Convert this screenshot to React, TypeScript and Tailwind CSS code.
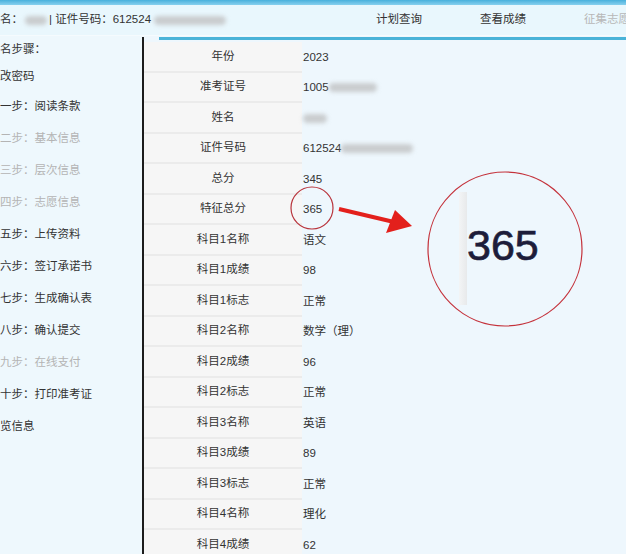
import React from "react";

const rows: { label: string; value: React.ReactNode }[] = [
  { label: "年份", value: "2023" },
  { label: "准考证号", value: <>1005<Blur w={48} /></> },
  { label: "姓名", value: <Blur w={24} /> },
  { label: "证件号码", value: <>612524<Blur w={72} /></> },
  { label: "总分", value: "345" },
  { label: "特征总分", value: "365" },
  { label: "科目1名称", value: "语文" },
  { label: "科目1成绩", value: "98" },
  { label: "科目1标志", value: "正常" },
  { label: "科目2名称", value: "数学（理）" },
  { label: "科目2成绩", value: "96" },
  { label: "科目2标志", value: "正常" },
  { label: "科目3名称", value: "英语" },
  { label: "科目3成绩", value: "89" },
  { label: "科目3标志", value: "正常" },
  { label: "科目4名称", value: "理化" },
  { label: "科目4成绩", value: "62" },
];

const steps: { text: string; off?: boolean }[] = [
  { text: "一步：阅读条款" },
  { text: "二步：基本信息", off: true },
  { text: "三步：层次信息", off: true },
  { text: "四步：志愿信息", off: true },
  { text: "五步：上传资料" },
  { text: "六步：签订承诺书" },
  { text: "七步：生成确认表" },
  { text: "八步：确认提交" },
  { text: "九步：在线支付", off: true },
  { text: "十步：打印准考证" },
  { text: "览信息" },
];

function Blur({ w }: { w: number }) {
  return (
    <span
      className="inline-block h-[9px] rounded-full bg-[#c9ccce] blur-[2px] align-middle"
      style={{ width: w }}
    />
  );
}

export default function App() {
  return (
    <div className="relative w-[626px] h-[554px] overflow-hidden bg-[#eef7fd] text-[11.5px] text-[#333] font-['Liberation_Sans','Noto_Sans_CJK_SC',sans-serif]">
      <div className="h-[5px] bg-gradient-to-b from-[#47b0dc] to-[#86d0ee]" />
      <div className="h-[30px] bg-[#e9f7fd] flex items-center">
        <div className="w-[347px] shrink-0 flex items-center whitespace-nowrap">
          <span>名：</span>
          <span className="ml-[2px]"><Blur w={22} /></span>
          <span className="ml-[2px]">| 证件号码：612524</span>
          <span className="ml-[3px]"><Blur w={72} /></span>
        </div>
        <div className="w-[104px] shrink-0 text-center">计划查询</div>
        <div className="w-[104px] shrink-0 text-center">查看成绩</div>
        <div className="w-[104px] shrink-0 text-center text-[#b8b8b8] whitespace-nowrap">征集志愿</div>
      </div>
      <div className="h-[1px] bg-[#f5fbfe]" />

      <div className="flex">
        <aside className="w-[142px] shrink-0 bg-[#eef8fd] whitespace-nowrap pt-[2px]">
          <div className="h-[24px] flex items-center">名步骤：</div>
          <div className="h-[29px] flex items-center">改密码</div>
          {steps.map((s) => (
            <div
              key={s.text}
              className={`h-[32px] flex items-center ${s.off ? "text-[#b4b4b4]" : ""}`}
            >
              {s.text}
            </div>
          ))}
        </aside>

        <main className="flex-1 border-l-2 border-[#1c1c1c] mt-[1px]">
          <div className="ml-[15px] h-[3px] bg-[#4ab3d8]" />
          <div className="h-[2px]" />
          {rows.map((r) => (
            <div key={r.label} className="flex h-[30.5px]">
              <div className="w-[158px] shrink-0 bg-[#f6f6f6] border-b-2 border-[#ebebeb] flex items-center justify-center">
                {r.label}
              </div>
              <div className="flex items-center pl-[1px] whitespace-nowrap">{r.value}</div>
            </div>
          ))}
        </main>
      </div>

      {/* annotation */}
      <div className="absolute left-[459px] top-[192px] w-[8px] h-[113px] bg-gradient-to-r from-[#f4f4f4] to-[#e6e6e6] opacity-80" />
      <div className="absolute left-[467px] top-[224px] text-[43px] leading-none text-[#1d1d3a] [-webkit-text-stroke:0.7px_#1d1d3a]">
        365
      </div>
      <svg className="absolute inset-0 pointer-events-none" width="626" height="554" viewBox="0 0 626 554">
        <circle cx="312" cy="208" r="21" fill="none" stroke="#b8333b" strokeWidth="1.2" />
        <circle cx="505" cy="249" r="77" fill="none" stroke="#c4323b" strokeWidth="1.2" />
        <line x1="339" y1="209" x2="394" y2="222" stroke="#e3201c" strokeWidth="4" />
        <polygon points="412,226 386,233 395,210" fill="#e3201c" />
      </svg>
    </div>
  );
}
